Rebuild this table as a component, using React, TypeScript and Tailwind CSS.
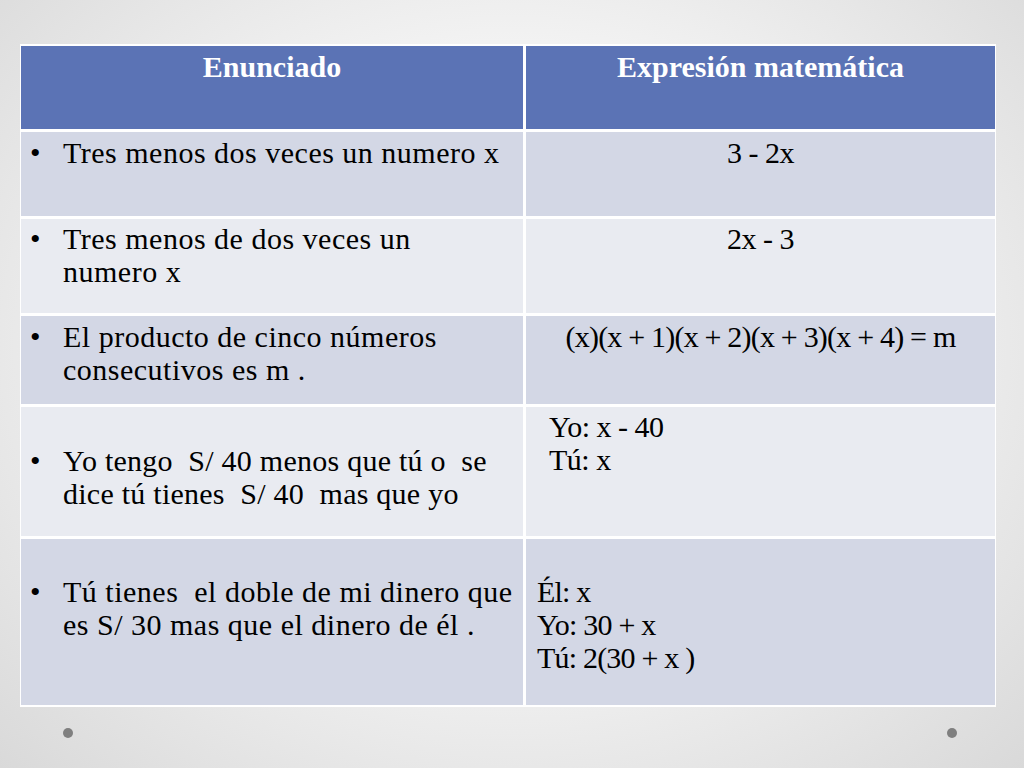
const serif = { fontFamily: '"Liberation Serif", "DejaVu Serif", serif' };

function Bullet({ lines }: { lines: string[] }) {
  return (
    <div className="flex">
      <span className="w-[42px] shrink-0 pl-[9px]">•</span>
      <div className="whitespace-pre">
        {lines.map((l, i) => (
          <div key={i}>{l}</div>
        ))}
      </div>
    </div>
  );
}

export default function App() {
  return (
    <div
      className="w-[1024px] h-[768px] relative overflow-hidden bg-[radial-gradient(ellipse_at_50%_45%,#ffffff_0%,#f5f5f5_45%,#d9d9d9_100%)] text-black"
      style={serif}
    >
      <div className="pt-[44px] pl-[20px]">
        <div className="w-[976px] bg-white px-[1px] py-[2px] grid grid-cols-[502px_469px] gap-[3px] text-[30px] leading-[33px] tracking-[0.5px]">
          <div className="h-[83px] bg-[#5b73b5] text-white font-bold text-center pt-[4px] tracking-normal">Enunciado</div>
          <div className="h-[83px] bg-[#5b73b5] text-white font-bold text-center pt-[4px] tracking-normal">Expresión matemática</div>

          <div className="h-[84px] bg-[#d3d7e5] pt-[4px]">
            <Bullet lines={['Tres menos dos veces un numero x']} />
          </div>
          <div className="h-[84px] bg-[#d3d7e5] pt-[4px] text-center tracking-[-0.5px]">3 - 2x</div>

          <div className="h-[94px] bg-[#e9ebf1] pt-[3px]">
            <Bullet lines={['Tres menos de dos veces un', 'numero x']} />
          </div>
          <div className="h-[94px] bg-[#e9ebf1] pt-[3px] text-center tracking-[-0.5px]">2x - 3</div>

          <div className="h-[88px] bg-[#d3d7e5] pt-[4px]">
            <Bullet lines={['El producto de cinco números', 'consecutivos es m .']} />
          </div>
          <div className="h-[88px] bg-[#d3d7e5] pt-[4px] text-center tracking-[-0.8px]">(x)(x + 1)(x + 2)(x + 3)(x + 4) = m</div>

          <div className="h-[129px] bg-[#e9ebf1] pt-[37px] tracking-[0.25px]">
            <Bullet lines={['Yo tengo  S/ 40 menos que tú o  se', 'dice tú tienes  S/ 40  mas que yo']} />
          </div>
          <div className="h-[129px] bg-[#e9ebf1] pt-[3px] pl-[23px] tracking-[-0.5px]">
            <div>Yo: x - 40</div>
            <div>Tú: x</div>
          </div>

          <div className="h-[166px] bg-[#d3d7e5] pt-[36px]">
            <Bullet lines={['Tú tienes  el doble de mi dinero que', 'es S/ 30 mas que el dinero de él .']} />
          </div>
          <div className="h-[166px] bg-[#d3d7e5] pt-[36px] pl-[11px] tracking-[-0.8px]">
            <div>Él: x</div>
            <div>Yo: 30 + x</div>
            <div>Tú: 2(30 + x )</div>
          </div>
        </div>
      </div>
      <div className="absolute left-[63px] top-[728px] w-[10px] h-[10px] rounded-full bg-[#7f7f7f]" />
      <div className="absolute left-[947px] top-[728px] w-[10px] h-[10px] rounded-full bg-[#7f7f7f]" />
    </div>
  );
}
